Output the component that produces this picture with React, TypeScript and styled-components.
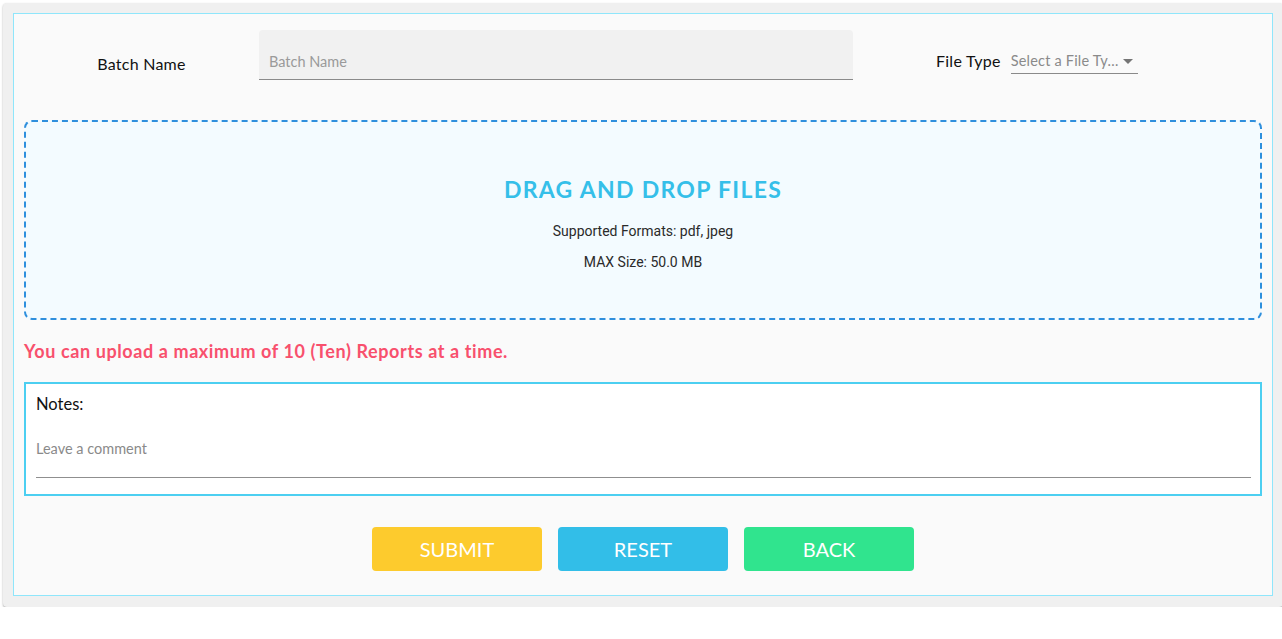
import React from "react";
import styled, { createGlobalStyle } from "styled-components";

const Global = createGlobalStyle`
  html, body { margin: 0; padding: 0; background: #ffffff; overflow: hidden; }
  body { font-family: "Lato", "Noto Sans", sans-serif; }
  * { box-sizing: border-box; }
`;

const Card = styled.div`
  margin: 3px 0 0 3px;
  width: 1280px;
  padding: 10px 10px 11px 10px;
  background: #f0f0f0;
  border-radius: 4px;
  box-shadow: 0 1px 2px rgba(0, 0, 0, 0.35);
`;

const Panel = styled.div`
  border: 1px solid #8fe6fb;
  background: #fafafa;
  padding: 16px 10px 24px 10px;
  display: flex;
  flex-direction: column;
`;

const TopRow = styled.div`
  display: flex;
  align-items: flex-start;
  height: 50px;
`;

const FieldLabel = styled.label<{ $width?: number; $top: number }>`
  ${(p) => (p.$width ? `width: ${p.$width}px; text-align: center;` : "")}
  margin-top: ${(p) => p.$top}px;
  font-family: "Lato", sans-serif;
  font-size: 16px;
  letter-spacing: 0.25px;
  color: #111;
  line-height: 20px;
  flex-shrink: 0;
`;

const FilledInput = styled.div`
  width: 594px;
  height: 50px;
  background: #f1f1f1;
  border-radius: 4px 4px 0 0;
  border-bottom: 1px solid #8a8a8a;
  padding: 23px 10px 0 10px;
  font-family: "Lato", sans-serif;
  font-size: 14.5px;
  color: #9a9a9a;
  line-height: 18px;
`;

const FileGroup = styled.div`
  display: flex;
  align-items: flex-start;
  margin-left: 83px;
  gap: 10px;
`;

const SelectBox = styled.div`
  margin-top: 21px;
  width: 127px;
  height: 23px;
  border-bottom: 1px solid #8a8a8a;
  display: flex;
  align-items: flex-start;
  justify-content: space-between;
  font-family: "Lato", sans-serif;
  font-size: 14.5px;
  letter-spacing: 0.2px;
  color: #8a8a8a;
  line-height: 18px;
  padding-top: 1px;
  white-space: nowrap;
`;

const Caret = styled.span`
  width: 0;
  height: 0;
  margin: 7px 5px 0 0;
  border-left: 5px solid transparent;
  border-right: 5px solid transparent;
  border-top: 5px solid #757575;
`;

const DropZone = styled.div`
  margin-top: 40px;
  height: 200px;
  border: 2px dashed #2e8fdd;
  border-radius: 8px;
  background: #f3fbff;
  display: flex;
  flex-direction: column;
  align-items: center;
  padding-top: 53px;
`;

const DropTitle = styled.div`
  font-family: "Lato", sans-serif;
  font-weight: 700;
  font-size: 23px;
  letter-spacing: 1.3px;
  color: #35bfe9;
  line-height: 28px;
`;

const DropInfo = styled.div<{ $top: number }>`
  margin-top: ${(p) => p.$top}px;
  font-family: "Roboto", sans-serif;
  font-size: 14px;
  color: #2a2a2a;
  line-height: 16px;
`;

const Warning = styled.div`
  margin-top: 20px;
  font-family: "Lato", sans-serif;
  font-weight: 700;
  font-size: 18px;
  letter-spacing: 0.6px;
  color: #f8506d;
  line-height: 22px;
`;

const NotesBox = styled.div`
  margin-top: 20px;
  height: 114px;
  border: 2px solid #4ccff1;
  background: #ffffff;
  padding: 9px 9px 0 10px;
  display: flex;
  flex-direction: column;
`;

const NotesLabel = styled.div`
  font-family: "Lato", sans-serif;
  font-size: 16.5px;
  color: #111;
  line-height: 22px;
`;

const CommentField = styled.div`
  margin-top: 25px;
  height: 38px;
  border-bottom: 1px solid #8f8f8f;
  font-family: "Lato", sans-serif;
  font-size: 14.5px;
  color: #8a8a8a;
  line-height: 18px;
`;

const ButtonRow = styled.div`
  margin-top: 31px;
  display: flex;
  justify-content: center;
  gap: 16px;
`;

const ActionButton = styled.button<{ $bg: string }>`
  width: 170px;
  height: 44px;
  border: none;
  border-radius: 4px;
  background: ${(p) => p.$bg};
  color: #ffffff;
  font-family: "Lato", sans-serif;
  font-size: 20px;
  line-height: 42px;
  padding: 0;
  cursor: pointer;
`;

export default function App() {
  return (
    <>
      <Global />
      <Card>
        <Panel>
          <TopRow>
            <FieldLabel $width={235} $top={24}>
              Batch Name
            </FieldLabel>
            <FilledInput>Batch Name</FilledInput>
            <FileGroup>
              <FieldLabel $top={21}>File Type</FieldLabel>
              <SelectBox>
                <span>Select a File Ty…</span>
                <Caret />
              </SelectBox>
            </FileGroup>
          </TopRow>
          <DropZone>
            <DropTitle>DRAG AND DROP FILES</DropTitle>
            <DropInfo $top={20}>Supported Formats: pdf, jpeg</DropInfo>
            <DropInfo $top={15}>MAX Size: 50.0 MB</DropInfo>
          </DropZone>
          <Warning>You can upload a maximum of 10 (Ten) Reports at a time.</Warning>
          <NotesBox>
            <NotesLabel>Notes:</NotesLabel>
            <CommentField>Leave a comment</CommentField>
          </NotesBox>
          <ButtonRow>
            <ActionButton $bg="#fdcb2d">SUBMIT</ActionButton>
            <ActionButton $bg="#32bee8">RESET</ActionButton>
            <ActionButton $bg="#30e48e">BACK</ActionButton>
          </ButtonRow>
        </Panel>
      </Card>
    </>
  );
}
